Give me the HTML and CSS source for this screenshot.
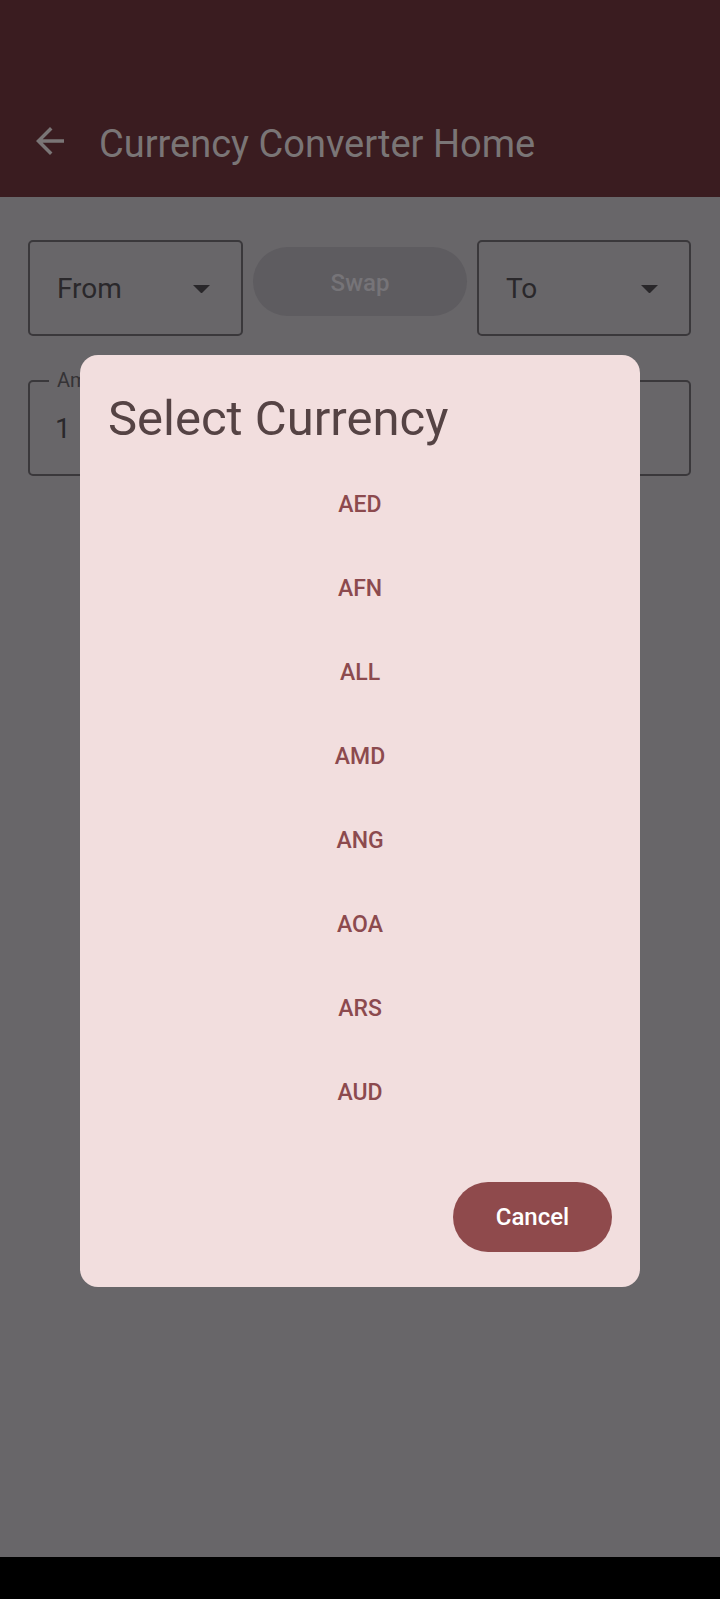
FILE: index.html
```html
<!DOCTYPE html>
<html lang="en">
<head>
<meta charset="utf-8">
<title>Currency Converter Home</title>
<link rel="stylesheet" href="styles.css">
</head>
<body>
<div class="screen">
  <header class="appbar">
    <div class="appbar-row">
      <svg class="back-icon" viewBox="0 0 24 24" aria-hidden="true"><path d="M20 11H7.83l5.59-5.59L12 4l-8 8 8 8 1.41-1.41L7.83 13H20v-2z"/></svg>
      <h1 class="appbar-title">Currency Converter Home</h1>
    </div>
  </header>
  <main class="content">
    <div class="selectors">
      <div class="dropdown">
        <span class="dropdown-text">From</span>
        <svg class="drop-icon" viewBox="0 0 10 5" aria-hidden="true"><path d="M0 0l5 5 5-5z"/></svg>
      </div>
      <button class="swap-btn" disabled>Swap</button>
      <div class="dropdown">
        <span class="dropdown-text">To</span>
        <svg class="drop-icon" viewBox="0 0 10 5" aria-hidden="true"><path d="M0 0l5 5 5-5z"/></svg>
      </div>
    </div>
    <div class="field">
      <span class="field-label">Amount</span>
      <span class="field-value">1</span>
    </div>
  </main>
  <div class="dialog" role="dialog">
    <h2 class="dialog-title">Select Currency</h2>
    <ul class="currency-list">
      <li class="currency-item">AED</li>
      <li class="currency-item">AFN</li>
      <li class="currency-item">ALL</li>
      <li class="currency-item">AMD</li>
      <li class="currency-item">ANG</li>
      <li class="currency-item">AOA</li>
      <li class="currency-item">ARS</li>
      <li class="currency-item">AUD</li>
    </ul>
    <div class="dialog-actions">
      <button class="cancel-btn">Cancel</button>
    </div>
  </div>
</div>
<div class="navbar"></div>
</body>
</html>
```

FILE: styles.css
```css
* { box-sizing: border-box; }
html, body { margin: 0; padding: 0; }
body {
  width: 720px;
  height: 1599px;
  overflow: hidden;
  background: #000;
  font-family: Roboto, "Noto Sans", "Liberation Sans", sans-serif;
}
.screen {
  position: relative;
  height: 1557px;
  background: #686669;
  overflow: hidden;
}
.appbar {
  height: 197px;
  padding-top: 85px;
  background: #3a1c20;
}
.appbar-row {
  height: 112px;
  display: flex;
  align-items: center;
  padding-left: 29px;
  gap: 28px;
}
.back-icon {
  width: 42px;
  height: 42px;
  fill: #7a7576;
  flex: none;
}
.appbar-title {
  margin: 0;
  padding-top: 5px;
  font-size: 38px;
  line-height: 38px;
  font-weight: 400;
  color: #7a7576;
}
.content {
  padding-top: 43px;
}
.selectors {
  display: grid;
  grid-template-columns: 215px 214px 214px;
  align-items: start;
  column-gap: 10px;
  padding: 0 29px 0 28px;
}
.dropdown {
  height: 96px;
  border: 2px solid #3a383b;
  border-radius: 5px;
  display: flex;
  align-items: center;
  justify-content: space-between;
  padding: 0 31px 0 27px;
}
.dropdown-text {
  font-size: 28px;
  color: #2a282b;
}
.drop-icon {
  width: 17px;
  height: 8.5px;
  fill: #29272a;
  margin-top: 2px;
}
.swap-btn {
  width: 100%;
  height: 69px;
  margin-top: 7px;
  border: none;
  border-radius: 35px;
  background: #5e5c60;
  color: #767478;
  font-family: inherit;
  font-size: 24px;
  font-weight: 500;
  padding: 2px 0 0;
}
.field {
  position: relative;
  height: 96px;
  margin: 44px 29px 0 28px;
  border: 2px solid #3a383b;
  border-radius: 5px;
  display: flex;
  align-items: center;
  padding-left: 25px;
}
.field-label {
  position: absolute;
  top: -12px;
  left: 19px;
  padding: 0 8px;
  background: #686669;
  font-size: 20px;
  line-height: 20px;
  color: #353336;
}
.field-value {
  font-size: 28px;
  color: #2a282b;
}
.dialog {
  position: absolute;
  top: 355px;
  left: 80px;
  width: 560px;
  background: #f2dede;
  border-radius: 18px;
  padding: 36px 28px 35px 28px;
}
.dialog-title {
  margin: 0;
  font-size: 49px;
  line-height: 56px;
  font-weight: 400;
  color: #554344;
}
.currency-list {
  list-style: none;
  margin: 16px 0 0;
  padding: 0;
}
.currency-item {
  height: 84px;
  line-height: 84px;
  text-align: center;
  font-size: 23px;
  font-weight: 500;
  color: #8c4a4e;
}
.dialog-actions {
  display: flex;
  justify-content: flex-end;
  margin-top: 47px;
}
.cancel-btn {
  width: 159px;
  height: 70px;
  border: none;
  border-radius: 35px;
  background: #8f4a4c;
  color: #ffffff;
  font-family: inherit;
  font-size: 24px;
  font-weight: 500;
  padding: 0;
}
.navbar {
  height: 42px;
  background: #000;
}
```
